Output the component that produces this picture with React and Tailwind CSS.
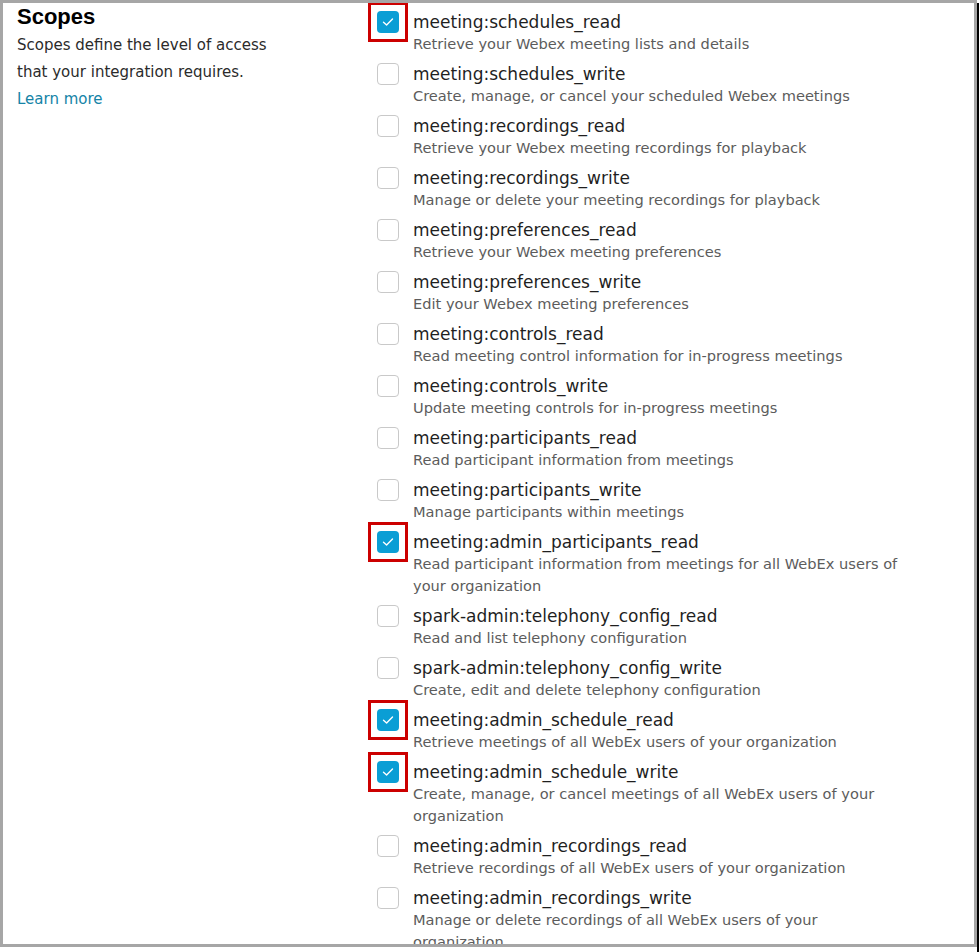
import React from 'react';

const scopes = [
    { name: 'meeting:schedules_read', desc: 'Retrieve your Webex meeting lists and details', checked: true },
    { name: 'meeting:schedules_write', desc: 'Create, manage, or cancel your scheduled Webex meetings' },
    { name: 'meeting:recordings_read', desc: 'Retrieve your Webex meeting recordings for playback' },
    { name: 'meeting:recordings_write', desc: 'Manage or delete your meeting recordings for playback' },
    { name: 'meeting:preferences_read', desc: 'Retrieve your Webex meeting preferences' },
    { name: 'meeting:preferences_write', desc: 'Edit your Webex meeting preferences' },
    { name: 'meeting:controls_read', desc: 'Read meeting control information for in-progress meetings' },
    { name: 'meeting:controls_write', desc: 'Update meeting controls for in-progress meetings' },
    { name: 'meeting:participants_read', desc: 'Read participant information from meetings' },
    { name: 'meeting:participants_write', desc: 'Manage participants within meetings' },
    { name: 'meeting:admin_participants_read', desc: 'Read participant information from meetings for all WebEx users of your organization', checked: true },
    { name: 'spark-admin:telephony_config_read', desc: 'Read and list telephony configuration' },
    { name: 'spark-admin:telephony_config_write', desc: 'Create, edit and delete telephony configuration' },
    { name: 'meeting:admin_schedule_read', desc: 'Retrieve meetings of all WebEx users of your organization', checked: true },
    { name: 'meeting:admin_schedule_write', desc: 'Create, manage, or cancel meetings of all WebEx users of your organization', checked: true },
    { name: 'meeting:admin_recordings_read', desc: 'Retrieve recordings of all WebEx users of your organization' },
    { name: 'meeting:admin_recordings_write', desc: 'Manage or delete recordings of all WebEx users of your organization' },
];

const Checkbox = ({ checked }) => (
    <div className="relative w-[22px] h-[22px] shrink-0">
        {checked ? (
            <div className="w-[22px] h-[22px] rounded-[4px] bg-[#0a9ed5] flex items-center justify-center">
                <svg width="12" height="10" viewBox="0 0 12 10" fill="none">
                    <path d="M1.5 5.2 L4.6 8 L10.5 2" stroke="#ffffff" strokeWidth="1.4" strokeLinecap="round" strokeLinejoin="round" />
                </svg>
            </div>
        ) : (
            <div className="w-[22px] h-[22px] rounded-[4px] border border-[#c9c9c9] bg-white" />
        )}
        {checked && (
            <div className="absolute -top-[9px] -left-[9px] w-[40px] h-[40px] border-[3px] border-[#cc0000]" />
        )}
    </div>
);

const App = () => {
    return (
        <div className="w-[979px] h-[952px] bg-white flex" style={{ fontFamily: '"DejaVu Sans", Arial, sans-serif' }}>
            <div className="w-[977px] h-[947px] border-[3px] border-[#a6a6a6] overflow-hidden flex">
                {/* left column */}
                <div className="w-[371px] pl-[14px] shrink-0">
                    <h2 className="text-[22px] leading-[28px] mb-[1px] font-bold text-black" style={{ fontFamily: '"Liberation Sans", Arial, sans-serif' }}>Scopes</h2>
                    <p className="text-[15px] leading-[27px] text-[#2b2b2b]">
                        Scopes define the level of access<br />that your integration requires.
                    </p>
                    <a href="#" className="text-[15px] leading-[27px] text-[#1584a7]">Learn more</a>
                </div>

                {/* scopes list */}
                <div className="flex flex-col gap-[8px] pt-[8px] pl-[3px]">
                    {scopes.map((s) => (
                        <div key={s.name} className="flex gap-[14px]">
                            <Checkbox checked={s.checked} />
                            <div className="w-[492px]">
                                <div className="text-[17px] leading-[22px] text-[#1f1f1f]">{s.name}</div>
                                <div className="text-[14.6px] leading-[22px] text-[#5c5c5c]">{s.desc}</div>
                            </div>
                        </div>
                    ))}
                </div>
            </div>
            <div className="w-[2px] h-[949px] mt-[3px] bg-black" />
        </div>
    );
};

export default App;
